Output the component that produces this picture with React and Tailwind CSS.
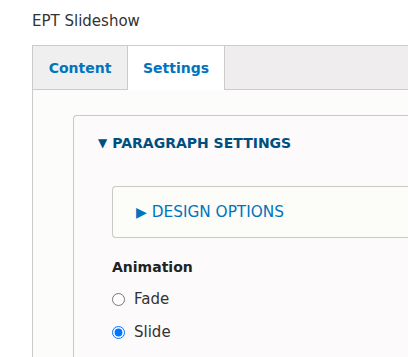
export default function App() {
  return (
    <div className="w-[408px] h-[357px] overflow-hidden bg-white text-[#222] font-['DejaVu_Sans',sans-serif]">
      <div className="pl-[32px] pt-[12px] h-[45px] text-[15px] leading-[18px] text-[#333]">EPT Slideshow</div>

      <div className="ml-[32px] flex h-[45px]">
        <div className="w-[96px] flex items-center justify-center pt-[1px] bg-[#efefef] border border-[#cbcbcb] text-[14px] font-bold text-[#0074bd]">
          Content
        </div>
        <div className="w-[97px] flex items-center justify-center pt-[1px] bg-white border-t border-r border-[#cbcbcb] text-[14px] font-bold text-[#0074bd]">
          Settings
        </div>
        <div className="flex-1 bg-[#efeded] border-t border-b border-[#cbcbcb]" />
      </div>

      <div className="ml-[32px] border-l border-[#cbcbcb] bg-[#fcfcfa] pl-[40px] pt-[25px] h-[267px]">
        <div className="h-full border-l border-t border-[#c8c8c8] rounded-tl-[4px] bg-[#fcfafa]">
          <div className="flex items-center h-[53px] pt-[1px] pl-[24px] text-[14px] font-bold text-[#004f80]">
            <span className="text-[12px] mr-[5px]">▼</span>
            PARAGRAPH SETTINGS
          </div>
          <div className="pl-[38px] pt-[17px]">
            <div className="h-[52px] flex items-center pl-[23px] border-l border-t border-b border-[#c8c8c8] rounded-l-[4px] bg-[#fcfcf8] text-[15.3px] text-[#0074bd]">
              <span className="text-[14px] mr-[5px]">▶</span>
              DESIGN OPTIONS
            </div>
            <div className="mt-[20px] text-[14px] font-bold text-[#222] leading-[18px]">Animation</div>
            <label className="mt-[14px] flex items-center gap-[9px] text-[15px] leading-[18px] text-[#333]">
              <input type="radio" name="anim" className="m-0 w-[13px] h-[13px]" />
              Fade
            </label>
            <label className="mt-[15px] flex items-center gap-[9px] text-[15px] leading-[18px] text-[#333]">
              <input type="radio" name="anim" defaultChecked className="m-0 w-[13px] h-[13px]" />
              Slide
            </label>
          </div>
        </div>
      </div>
    </div>
  );
}
